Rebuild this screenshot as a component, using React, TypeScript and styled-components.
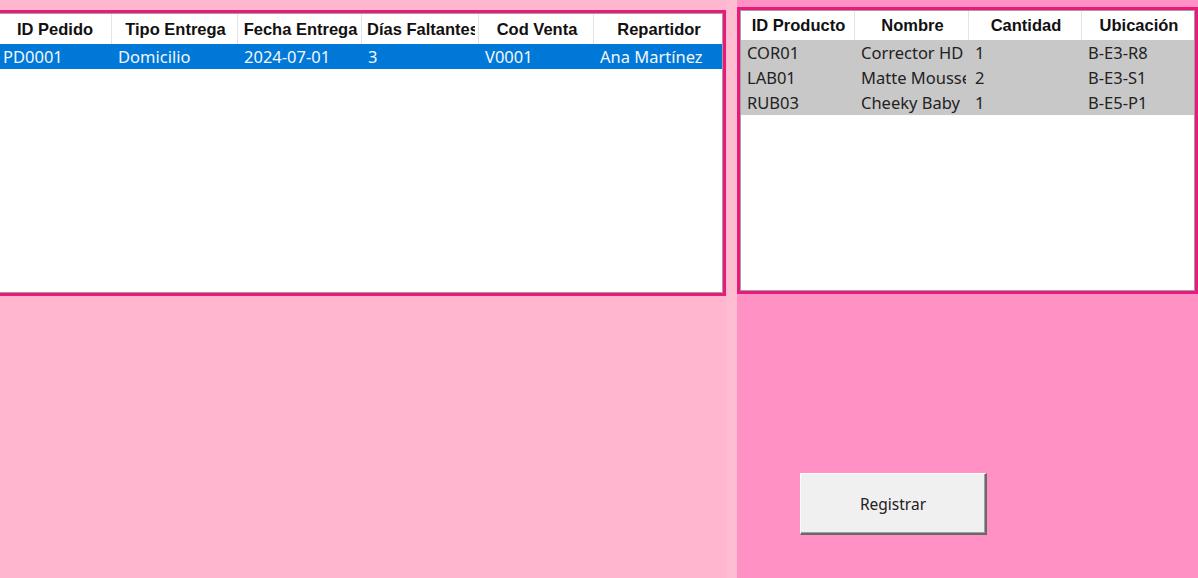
import styled, { createGlobalStyle } from "styled-components";

const GlobalStyle = createGlobalStyle`
  html, body {
    margin: 0;
    padding: 0;
    overflow: hidden;
  }
  body {
    font-family: "Noto Sans", "Open Sans", sans-serif;
  }
`;

const Screen = styled.div`
  display: flex;
  width: 1198px;
  height: 578px;
  overflow: hidden;
`;

const LeftPanel = styled.div`
  width: 727px;
  flex-shrink: 0;
  background: #ffb6ce;
  padding-top: 10px;
  box-sizing: border-box;
  overflow: hidden;
`;

const Splitter = styled.div`
  width: 10px;
  flex-shrink: 0;
  background: #ffbdd2;
`;

const RightPanel = styled.div`
  flex: 1;
  background: #ff91c4;
  padding-top: 7px;
  display: flex;
  flex-direction: column;
  align-items: flex-start;
  box-sizing: border-box;
`;

const GridFrame = styled.div<{ $w: number; $h: number; $shift?: number }>`
  width: ${(p) => p.$w}px;
  height: ${(p) => p.$h}px;
  margin-left: ${(p) => p.$shift ?? 0}px;
  border: 3px solid #ea1a7c;
  box-sizing: border-box;
  flex-shrink: 0;
`;

const GridInner = styled.div`
  height: 100%;
  border: 1px solid #a0a0a0;
  background: #fff;
  box-sizing: border-box;
  overflow: hidden;
`;

const Row = styled.div<{ $cols: string; $bg?: string; $h: number }>`
  display: grid;
  grid-template-columns: ${(p) => p.$cols};
  height: ${(p) => p.$h}px;
  line-height: ${(p) => p.$h}px;
  background: ${(p) => p.$bg ?? "#fff"};
`;

const HeadCell = styled.div`
  border-right: 1px solid #e3e3e3;
  padding-left: 5px;
  min-width: 0;
  &:last-child {
    border-right: none;
  }
`;

const HeadLabel = styled.span`
  display: block;
  margin-right: 3px;
  text-align: center;
  font-family: "Liberation Sans", Arial, sans-serif;
  font-weight: bold;
  font-size: 16.5px;
  color: #111;
  white-space: nowrap;
  overflow: hidden;
`;

const Cell = styled.div<{ $light?: boolean }>`
  padding-left: 6px;
  margin-right: 3px;
  min-width: 0;
  font-size: 16.5px;
  color: ${(p) => (p.$light ? "#f2f6fb" : "#222")};
  white-space: nowrap;
  overflow: hidden;
`;

const RegisterButton = styled.button`
  margin-top: 179px;
  margin-left: 63px;
  width: 187px;
  height: 62px;
  background: #f0f0f0;
  border: none;
  border-top: 1px solid #fff;
  border-left: 1px solid #fff;
  border-right: 2px solid #696969;
  border-bottom: 2px solid #696969;
  box-shadow: inset -1px -1px 0 #a0a0a0;
  font-family: "Noto Sans", "Open Sans", sans-serif;
  font-size: 15.5px;
  color: #222;
  padding: 0;
`;

const orderCols = "115px 126px 124px 117px 115px 128px";
const orderHeads = ["ID Pedido", "Tipo Entrega", "Fecha Entrega", "Días Faltantes", "Cod Venta", "Repartidor"];
const orders = [["PD0001", "Domicilio", "2024-07-01", "3", "V0001", "Ana Martínez"]];

const prodCols = "114px 114px 113px 112px";
const prodHeads = ["ID Producto", "Nombre", "Cantidad", "Ubicación"];
const products = [
  ["COR01", "Corrector HD", "1", "B-E3-R8"],
  ["LAB01", "Matte Mousse", "2", "B-E3-S1"],
  ["RUB03", "Cheeky Baby", "1", "B-E5-P1"],
];

export default function App() {
  return (
    <>
      <GlobalStyle />
      <Screen>
        <LeftPanel>
          <GridFrame $w={733} $h={286} $shift={-7}>
            <GridInner>
              <Row $cols={orderCols} $h={30}>
                {orderHeads.map((h) => (
                  <HeadCell key={h}>
                    <HeadLabel>{h}</HeadLabel>
                  </HeadCell>
                ))}
              </Row>
              {orders.map((r) => (
                <Row key={r[0]} $cols={orderCols} $h={25} $bg="#0078d7">
                  {r.map((c, i) => (
                    <Cell key={i} $light>
                      {c}
                    </Cell>
                  ))}
                </Row>
              ))}
            </GridInner>
          </GridFrame>
        </LeftPanel>
        <Splitter />
        <RightPanel>
          <GridFrame $w={461} $h={287}>
            <GridInner>
              <Row $cols={prodCols} $h={29}>
                {prodHeads.map((h) => (
                  <HeadCell key={h}>
                    <HeadLabel>{h}</HeadLabel>
                  </HeadCell>
                ))}
              </Row>
              {products.map((r) => (
                <Row key={r[0]} $cols={prodCols} $h={25} $bg="#c8c8c8">
                  {r.map((c, i) => (
                    <Cell key={i}>{c}</Cell>
                  ))}
                </Row>
              ))}
            </GridInner>
          </GridFrame>
          <RegisterButton>Registrar</RegisterButton>
        </RightPanel>
      </Screen>
    </>
  );
}
